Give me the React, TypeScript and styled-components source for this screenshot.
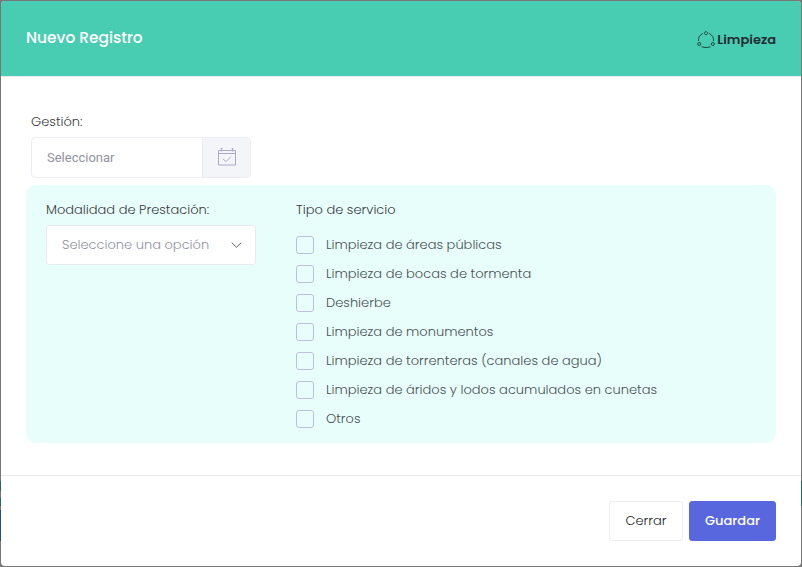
import React from "react";
import styled, { createGlobalStyle } from "styled-components";

const Global = createGlobalStyle`
  *, *::before, *::after { box-sizing: border-box; }
  html, body { margin: 0; padding: 0; }
  body {
    font-family: Poppins, Inter, "Liberation Sans", sans-serif;
    font-size: 13px;
    font-weight: 300;
    line-height: 20px;
    overflow: hidden;
  }
`;

const Backdrop = styled.div`
  width: 802px;
  height: 567px;
  padding: 1px;
  background:
    linear-gradient(#20695b, #20695b) 0 481px / 1px 10px no-repeat,
    linear-gradient(#20695b, #20695b) 0 498px / 1px 8px no-repeat,
    linear-gradient(#1f4f86, #1f4f86) 0 510px / 1px 31px no-repeat,
    linear-gradient(#20695b, #20695b) 801px 481px / 1px 25px no-repeat,
    #777778;
`;

const Dialog = styled.section`
  display: flex;
  flex-direction: column;
  width: 800px;
  height: 565px;
  background: #fff;
  border-radius: 4px;
  overflow: hidden;
`;

const Header = styled.header`
  display: flex;
  align-items: center;
  justify-content: space-between;
  height: 76px;
  padding: 0 25px;
  background: #48cdb2;
  border-bottom: 1px solid #e9ebf0;
`;

const Title = styled.h1`
  margin: 0;
  padding-bottom: 2px;
  color: #fff;
  font-size: 15.4px;
  font-weight: 500;
`;

const Category = styled.div`
  display: flex;
  align-items: center;
  gap: 2.5px;
  padding-top: 2px;
  color: #212b34;
  font-weight: 600;
`;

const Body = styled.main`
  flex: 1;
  padding: 35px 25px 0;
`;

const Label = styled.div`
  height: 20px;
  color: #3a3b42;
`;

const Period = styled.div`
  padding: 0 5px;
`;

const DateGroup = styled.div`
  display: flex;
  width: 220px;
  height: 41px;
  margin-top: 5px;
  border: 1px solid #ebedf2;
  border-radius: 4px;
  overflow: hidden;
`;

const DateField = styled.div`
  flex: 1;
  padding: 10px 15px;
  color: #9093a0;
  font-family: Roboto, sans-serif;
  font-weight: 400;
`;

const DateAddon = styled.div`
  display: grid;
  place-items: center;
  width: 48px;
  padding-bottom: 2px;
  background: #f4f5f8;
  border-left: 1px solid #ebedf2;
`;

const Panel = styled.div`
  display: flex;
  height: 258px;
  margin-top: 7px;
  padding: 15px 20px;
  background: #e7fefb;
  border-radius: 10px;
`;

const Mode = styled.div`
  width: 250px;
`;

const Select = styled.div`
  display: flex;
  align-items: center;
  justify-content: space-between;
  width: 210px;
  height: 40px;
  margin-top: 5px;
  padding: 0 13px 0 15px;
  background: #fff;
  border: 1px solid #ebe9f0;
  border-radius: 3px;
  color: #9093a0;
`;

const Options = styled.div`
  display: grid;
  grid-auto-rows: 29px;
  margin-top: 10px;
`;

const Option = styled.label`
  display: flex;
  align-items: center;
  gap: 12px;
  color: #4a5154;
`;

const Check = styled.input`
  appearance: none;
  width: 18px;
  height: 18px;
  margin: 1px 0 0;
  border: 1px solid #bdc0d9;
  border-radius: 3px;
`;

const Footer = styled.footer`
  display: flex;
  justify-content: flex-end;
  gap: 6px;
  height: 91px;
  padding: 25px;
  border-top: 1px solid #e8eaed;
`;

const Button = styled.button<{ $primary?: boolean }>`
  width: ${(p) => (p.$primary ? 87 : 74)}px;
  height: 40px;
  padding: 0;
  border: 1px solid ${(p) => (p.$primary ? "#5867dd" : "#ebedf2")};
  border-radius: 3px;
  background: ${(p) => (p.$primary ? "#5867dd" : "#fff")};
  color: ${(p) => (p.$primary ? "#fff" : "#212529")};
  font: inherit;
  font-weight: ${(p) => (p.$primary ? 500 : 300)};
`;

const services = [
  "Limpieza de áreas públicas",
  "Limpieza de bocas de tormenta",
  "Deshierbe",
  "Limpieza de monumentos",
  "Limpieza de torrenteras (canales de agua)",
  "Limpieza de áridos y lodos acumulados en cunetas",
  "Otros",
];

const NetworkIcon = () => (
  <svg width="18" height="18" viewBox="0 0 18 18" fill="none" stroke="#20463f" strokeWidth="1">
    <path d="M5.8 2.5A7.6 7.6 0 0 0 1.5 10M12.2 2.5a7.6 7.6 0 0 1 4.3 7.5M4.5 15.8Q9 17.4 13.5 15.8" />
    <path d="m9 .3 1.9 1.9L9 4.1 7.1 2.2z" />
    <circle cx="2.2" cy="13" r="1.5" />
    <circle cx="15.8" cy="13" r="1.5" />
  </svg>
);

const CalendarIcon = () => (
  <svg width="18" height="18" viewBox="0 0 18 18" fill="none" stroke="#a9abc6">
    <path d="M.5 2.5h17v14.5H.5zM.5 5.5h17M3.5.5v3M14.5.5v3M2.5.5h2M13.5.5h2" />
    <path d="m5 10.7 2.9 3 5-5" />
  </svg>
);

const Chevron = () => (
  <svg width="11" height="6" viewBox="0 0 11 6" fill="none" stroke="#5b6068">
    <path d="m.7.6 4.8 4.7L10.3.6" />
  </svg>
);

export default function App() {
  return (
    <>
      <Global />
      <Backdrop>
        <Dialog>
          <Header>
            <Title>Nuevo Registro</Title>
            <Category>
              <NetworkIcon />
              <span>Limpieza</span>
            </Category>
          </Header>
          <Body>
            <Period>
              <Label>Gestión:</Label>
              <DateGroup>
                <DateField>Seleccionar</DateField>
                <DateAddon><CalendarIcon /></DateAddon>
              </DateGroup>
            </Period>
            <Panel>
              <Mode>
                <Label>Modalidad de Prestación:</Label>
                <Select>
                  <span>Seleccione una opción</span>
                  <Chevron />
                </Select>
              </Mode>
              <div>
                <Label>Tipo de servicio</Label>
                <Options>
                  {services.map((name) => (
                    <Option key={name}>
                      <Check type="checkbox" />
                      <span>{name}</span>
                    </Option>
                  ))}
                </Options>
              </div>
            </Panel>
          </Body>
          <Footer>
            <Button>Cerrar</Button>
            <Button $primary>Guardar</Button>
          </Footer>
        </Dialog>
      </Backdrop>
    </>
  );
}
